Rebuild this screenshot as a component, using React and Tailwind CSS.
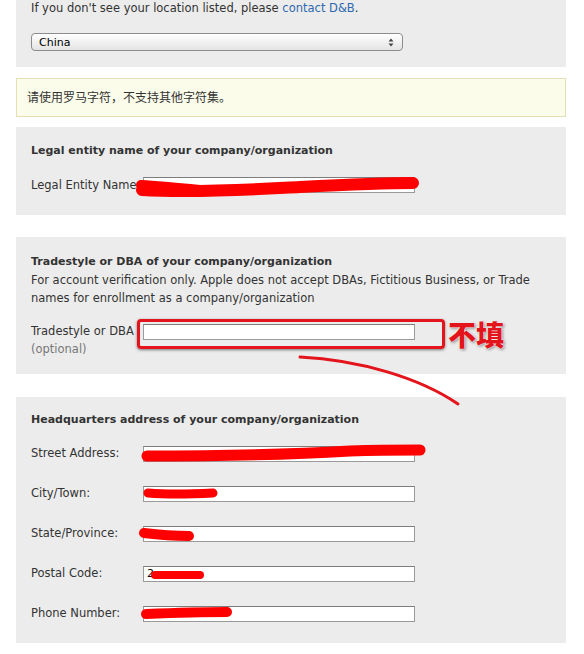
import React from "react";

const font = { fontFamily: '"DejaVu Sans", "Noto Sans CJK SC", sans-serif' };

const Field = ({ value = "" }) => (
  <div className="h-[16px] w-[272px] border border-[#9a9a9a] border-t-[#7d7d7d] bg-white px-[3px] text-[11px] leading-[14px] text-black">
    {value}
  </div>
);

const Scribble = ({ d, w = 10 }) => (
  <path d={d} stroke="#ff0000" strokeWidth={w} strokeLinecap="round" strokeLinejoin="round" fill="none" />
);

const AddressRow = ({ label, value }) => (
  <div className="flex items-start">
    <div className="w-[112px] leading-[14px]">{label}</div>
    <Field value={value} />
  </div>
);

export default function App() {
  return (
    <div className="relative min-h-[654px] bg-white text-[11.5px] leading-[18px] text-[#333]" style={font}>
      <div className="mx-[16px] w-[550px]">
        {/* country */}
        <div className="bg-[#ececec] px-[15px] pb-[16px]">
          <p className="leading-[16px]">
            If you don't see your location listed, please{" "}
            <span className="text-[#2f68ae]">contact D&amp;B</span>.
          </p>
          <div className="mt-[17px] flex h-[18px] w-[372px] items-center justify-between rounded-[4px] border border-[#8c8c8c] bg-gradient-to-b from-white to-[#e4e4e4] pl-[7px] pr-[8px] text-[11px] leading-[15px] text-black">
            <span>China</span>
            <svg width="6" height="9" viewBox="0 0 6 9">
              <path d="M3 0.5 L5.5 3.5 H0.5 Z M3 8.5 L5.5 5.5 H0.5 Z" fill="#444" />
            </svg>
          </div>
        </div>

        {/* notice */}
        <div className="mt-[11px] flex h-[39px] items-center border border-[#e2e0b4] bg-[#fcfcea] px-[10px] text-[12px] text-[#333]">
          请使用罗马字符，不支持其他字符集。
        </div>

        {/* legal name */}
        <div className="mt-[10px] bg-[#ececec] px-[15px] pb-[22px] pt-[16px]">
          <h2 className="text-[11px] font-bold leading-[16px]">Legal entity name of your company/organization</h2>
          <div className="mt-[18px] flex items-center">
            <div className="w-[112px] leading-[16px]">Legal Entity Name</div>
            <Field value="" />
          </div>
        </div>

        {/* tradestyle */}
        <div className="mt-[22px] bg-[#ececec] px-[15px] pb-[16px] pt-[16px]">
          <h2 className="text-[11px] font-bold leading-[18px]">Tradestyle or DBA of your company/organization</h2>
          <p className="leading-[18px]">
            For account verification only. Apple does not accept DBAs, Fictitious Business, or Trade names for enrollment as a company/organization
          </p>
          <div className="mt-[15px] flex items-start">
            <div className="w-[112px] leading-[18px]">
              <div>Tradestyle or DBA</div>
              <div className="text-[#777]">(optional)</div>
            </div>
            <div className="pt-[2px]">
              <Field />
            </div>
          </div>
        </div>

        {/* headquarters */}
        <div className="mt-[23px] flex flex-col gap-[24px] bg-[#ececec] px-[15px] pb-[21px] pt-[14px]">
          <h2 className="-mb-[7px] text-[11px] font-bold leading-[18px]">Headquarters address of your company/organization</h2>
          <AddressRow label="Street Address:" value="" />
          <AddressRow label="City/Town:" />
          <AddressRow label="State/Province:" />
          <AddressRow label="Postal Code:" value="2" />
          <AddressRow label="Phone Number:" />
        </div>
      </div>

      {/* annotation: box + label */}
      <div className="absolute left-[137px] top-[319px] h-[30px] w-[308px] rounded-[4px] border-[3px] border-[#e3141b] shadow-[0_1px_3px_rgba(0,0,0,0.5)]" />
      <div
        className="absolute left-[448px] top-[317px] text-[28px] font-black leading-[34px] text-[#e3141b]"
        style={{ fontFamily: '"Noto Sans CJK SC", sans-serif', textShadow: "0 0 2px #fff, 0 0 2px #fff, 1px 1px 3px rgba(0,0,0,0.6)" }}
      >
        不填
      </div>

      {/* red marker strokes */}
      <svg className="pointer-events-none absolute left-0 top-0" width="584" height="654">
        <path d="M300 357 C 360 360, 420 378, 458 404" stroke="#e3141b" strokeWidth="3" fill="none" strokeLinecap="round" />
        <Scribble d="M142 190 C 200 193, 260 189, 300 187 C 340 185, 380 183, 413 183" w={12} />
        <Scribble d="M141 185 C 160 186, 180 188, 200 190" w={10} />
        <Scribble d="M147 456 C 220 456, 300 454, 350 451 C 380 450, 405 450, 420 450" w={11} />
        <Scribble d="M148 493 C 170 495, 195 494, 213 493" w={9} />
        <Scribble d="M144 533 C 160 535, 178 536, 189 536" w={10} />
        <Scribble d="M155 575 L 200 575" w={8} />
        <Scribble d="M146 614 C 170 613, 200 612, 227 612" w={10} />
      </svg>
    </div>
  );
}
